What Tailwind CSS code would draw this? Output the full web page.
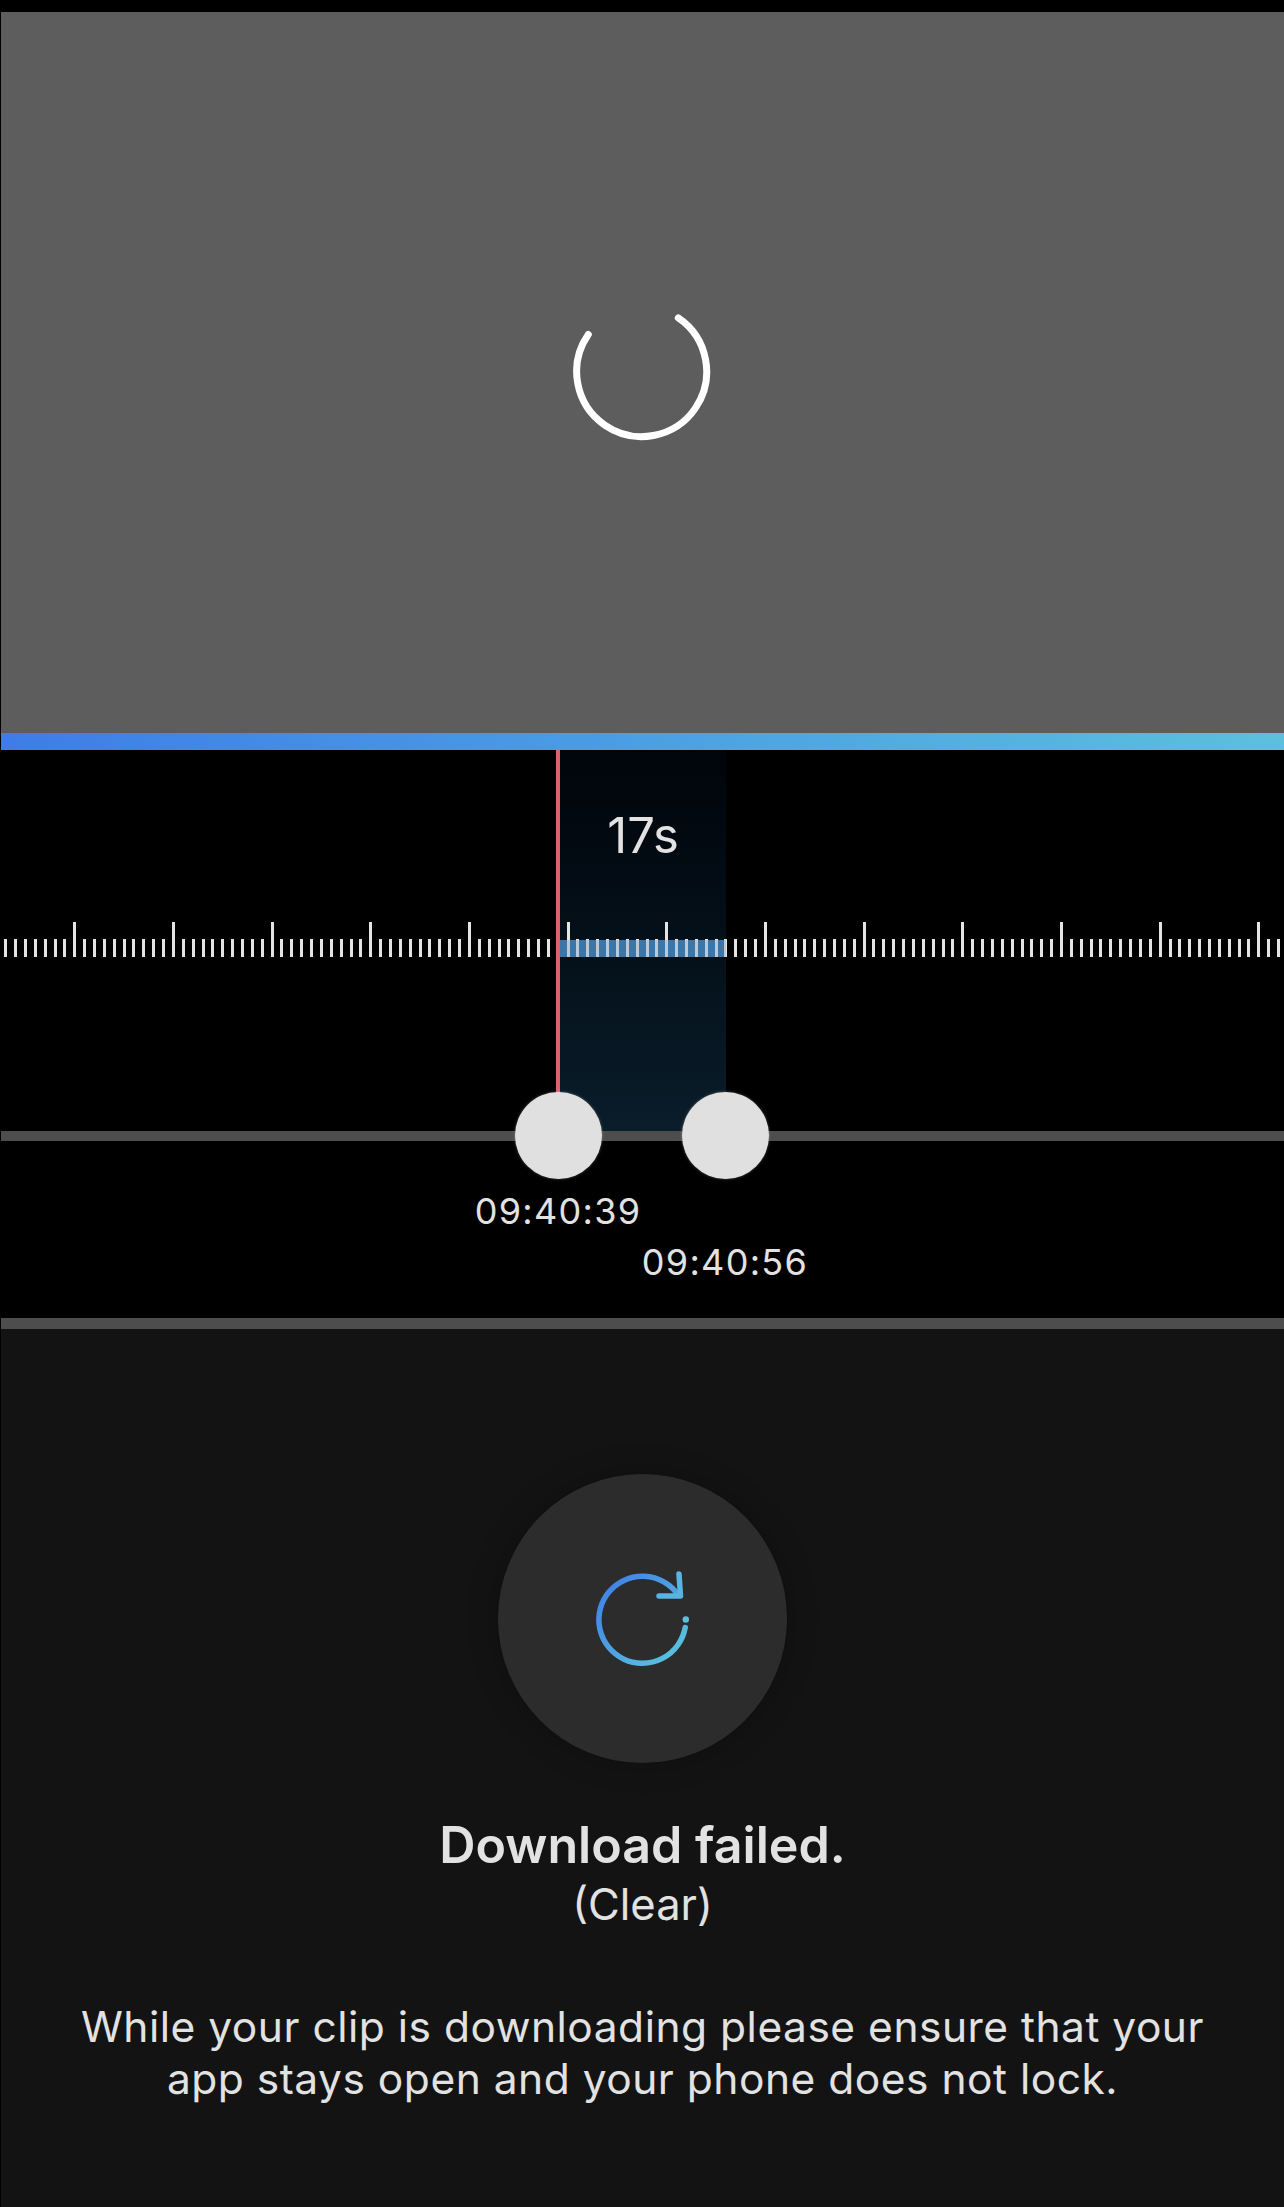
<!DOCTYPE html>
<html>

<head>
  <meta charset="UTF-8">
  <meta name="viewport" content="width=device-width, initial-scale=1.0">
  <script src="https://cdn.jsdelivr.net/npm/@tailwindcss/browser@4"></script>
</head>

<body class="bg-black">
  <div class="w-[1284px] h-[2207px] flex flex-col overflow-hidden bg-black pl-px font-['Inter','Liberation_Sans',sans-serif] text-[#e2e2e2]">

    <!-- video area -->
    <div class="mt-3 h-[721px] shrink-0 flex items-center justify-center bg-[#5d5d5d]">
      <svg width="144" height="144" viewBox="0 0 144 144" fill="none" class="mt-[-1px]">
        <path d="M17.3 34.5 A65 65 0 1 0 107.3 17.9" stroke="#fff" stroke-width="7" stroke-linecap="round" />
      </svg>
    </div>
    <div class="h-[17px] shrink-0 bg-gradient-to-r from-[#3f7ce8] to-[#5cc0dc]"></div>

    <!-- timeline -->
    <div class="relative h-[568px] shrink-0">
      <div class="absolute left-[559px] top-0 w-[166px] h-[381px] bg-gradient-to-b from-[#01050a] to-[#0a1d2a]"></div>
      <div class="absolute left-[559px] top-0 w-[166px] h-[114px] flex items-end justify-center text-[49px] leading-[56px]">17s</div>

      <div class="absolute left-[555px] top-[190px] w-[170px] h-[17px] bg-[#3a76a8]"></div>
      <div id="ruler" class="absolute left-0 top-[172px] w-[1283px] h-[35px] blur-[0.4px]"></div>
      <div class="absolute left-[555px] top-[190px] w-[170px] h-[17px] bg-[#3a76a8]/25"></div>

      <div class="absolute left-[555px] top-0 w-1 h-[345px] bg-[#d9626b]"></div>
      <div class="absolute left-0 top-[381px] w-[1283px] h-[10px] bg-[#4d4d4d]"></div>
      <div class="absolute left-[514px] top-[342px] size-[87px] rounded-full bg-[#e0e0e0] shadow-[0_0_3px_rgba(255,255,255,0.3)]"></div>
      <div class="absolute left-[681px] top-[342px] size-[87px] rounded-full bg-[#e0e0e0] shadow-[0_0_3px_rgba(255,255,255,0.3)]"></div>
      <div class="absolute left-[457px] top-[439px] w-[200px] text-center text-[36px] leading-[44px] tracking-[1.3px]">09:40:39</div>
      <div class="absolute left-[624px] top-[490px] w-[200px] text-center text-[36px] leading-[44px] tracking-[1.3px]">09:40:56</div>
    </div>

    <div class="h-[11px] shrink-0 bg-[#4d4d4d]"></div>

    <!-- download status -->
    <div class="flex-1 flex flex-col items-center bg-[#131313]">
      <div class="mt-[145px] ml-[-1px] size-[289px] rounded-full bg-[#2c2c2c] shadow-[0_0_30px_rgba(0,0,0,0.25)] flex items-center justify-center">
        <svg width="110" height="110" viewBox="0 0 110 110" fill="none">
          <defs>
            <linearGradient id="refresh" x1="0" y1="0" x2="1" y2="1">
              <stop offset="0" stop-color="#3f7ce8" />
              <stop offset="1" stop-color="#5cc8dc" />
            </linearGradient>
          </defs>
          <path d="M98.2 63.5 A43.5 43.5 0 1 1 91 30.8" stroke="url(#refresh)" stroke-width="5.5" stroke-linecap="round" />
          <path d="M92 10 L93.5 32 L72 32" stroke="#58b4e4" stroke-width="5.5" stroke-linecap="round" stroke-linejoin="round" />
          <circle cx="98.8" cy="55.5" r="3.2" fill="#5cc0dc" />
        </svg>
      </div>
      <p class="mt-[54px] text-[50.2px] leading-[56px] font-semibold">Download failed.</p>
      <p class="mt-[5px] text-[43.5px] leading-[52px]">(Clear)</p>
      <p class="mt-[71px] w-[1240px] text-center text-[42.5px] leading-[52px] tracking-[0.5px]">While your clip is downloading please ensure that your<br>app stays open and your phone does not lock.</p>
    </div>
  </div>
  <script>
    // ticks every 9.867px, long one every tenth
    var ruler = document.getElementById("ruler");
    for (let i = 0; i < 130; i++) {
      let tick = document.createElement("div");
      let isLong = i % 10 == 7;
      tick.className = isLong
        ? "absolute bottom-0 w-[3px] h-[35px] bg-[#e4e4e4]"
        : "absolute bottom-0 w-[3px] h-[18px] bg-[#e4e4e4]";
      tick.style.left = (3.2 + i * 9.867) + "px";
      ruler.appendChild(tick);
    }
  </script>
</body>

</html>
